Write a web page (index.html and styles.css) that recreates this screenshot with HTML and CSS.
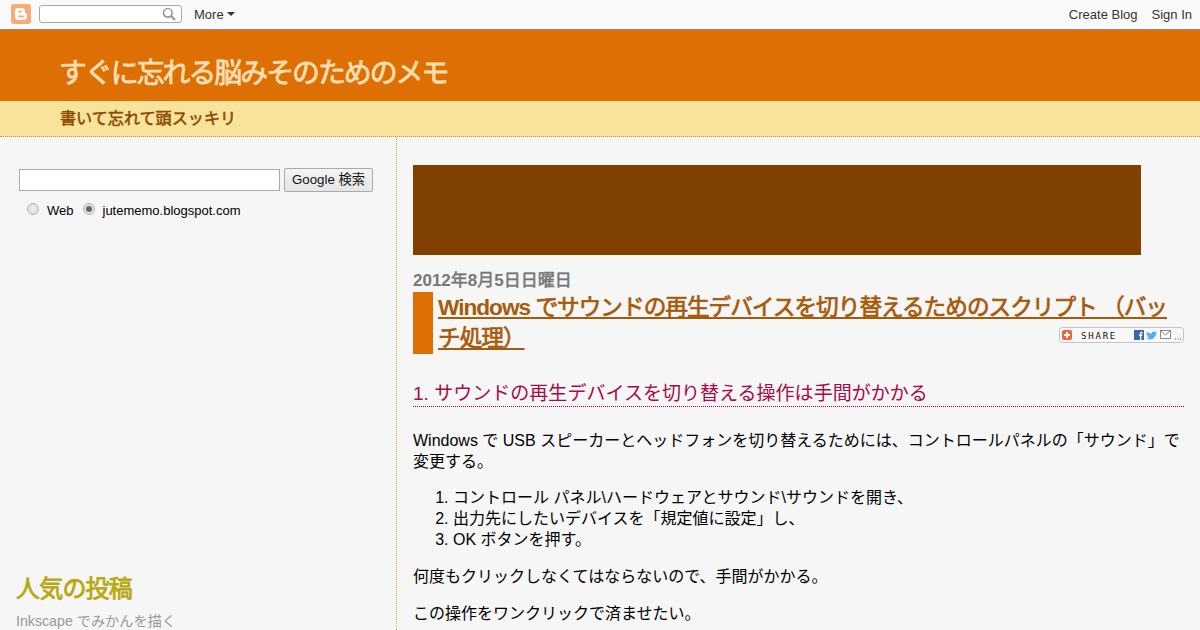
FILE: index.html
```html
<!DOCTYPE html>
<html lang="ja">
<head>
<meta charset="utf-8">
<title>すぐに忘れる脳みそのためのメモ</title>
<link rel="stylesheet" href="styles.css">
</head>
<body>
<nav class="navbar">
  <svg class="logo" width="20" height="20" viewBox="0 0 20 20"><rect width="20" height="20" rx="3" fill="#fba979"/><path d="M6.800 4h3.900C12.500 4 14 5.400 14 7.200V8.400c0 .5.4.8.9.8.6 0 1.100.4 1.100 1v2.800C16 15 14.400 16 12.800 16H7C5.300 16 4 14.700 4 13.200V6.800C4 5.200 5.300 4 6.800 4z" fill="#fff"/><rect x="7" y="6.800" width="4" height="1.600" rx=".8" fill="#fba979"/><rect x="7" y="11.600" width="6" height="1.600" rx=".8" fill="#fba979"/></svg>
  <div class="nav-search">
    <svg width="14" height="14" viewBox="0 0 14 14"><circle cx="5.800" cy="5.800" r="4.300" fill="none" stroke="#9a9a9a" stroke-width="1.700"/><path d="M9 9l4 4" stroke="#9a9a9a" stroke-width="2.300"/></svg>
  </div>
  <span class="nav-more">More</span><span class="caret"></span>
  <span class="nav-spacer"></span>
  <a class="nav-link">Create Blog</a>
  <a class="nav-link">Sign In</a>
</nav>
<header class="head">
  <h1 class="blog-title">すぐに忘れる脳みそのためのメモ</h1>
</header>
<div class="tagline"><p>書いて忘れて頭スッキリ</p></div>
<div class="columns">
  <aside class="side">
    <form class="cse">
      <div class="cse-row">
        <span class="cse-input"></span>
        <span class="cse-btn">Google 検索</span>
      </div>
      <div class="cse-radios">
        <span class="radio"></span><span class="radio-label">Web</span>
        <span class="radio on"></span><span class="radio-label">jutememo.blogspot.com</span>
      </div>
    </form>
    <h2 class="pop-title">人気の投稿</h2>
    <p class="pop-item">Inkscape でみかんを描く</p>
  </aside>
  <main class="main">
    <div class="ad"></div>
    <div class="date"><span class="lat">2012</span>年<span class="lat">8</span>月<span class="lat">5</span>日日曜日</div>
    <div class="post-head">
      <h2 class="post-title"><a><span class="lat">Windows</span> でサウンドの再生デバイスを切り替えるためのスクリプト （バッチ処理）</a></h2>
      <svg class="share" width="125" height="16" viewBox="0 0 125 16">
        <rect x=".5" y=".5" width="124" height="15" rx="3" fill="#f8f8f8" stroke="#c4c4c4"/>
        <rect x="3" y="3" width="10" height="10" rx="2" fill="#f0653c"/>
        <path d="M8 5v6M5 8h6" stroke="#fff" stroke-width="2"/>
        <text x="22" y="12" class="share-text">SHARE</text>
        <rect x="75" y="3" width="10" height="10" fill="#3b66a8"/>
        <path d="M81 13V9h-1V7.500h1V6.300c0-1 .6-1.500 1.500-1.500h1v1.500h-.7c-.3 0-.5.2-.5.500v.7h1.200l-.2 1.500h-1v4z" fill="#fff"/>
        <path d="M88 4.500c1.300 1.400 2.800 2.100 4.600 2.200-.1-1.800 2-3 3.400-1.700l1.800-.7-.9 1.500 1-.3-1 1.200c0 4-4.500 7.500-9.800 4.700 1.400.1 2.400-.2 3.400-.9-1.200-.1-2-.7-2.400-1.600h1.100c-1.200-.5-1.900-1.400-1.900-2.500l1 .3C87.500 5.800 87.400 5.200 88 4.500z" fill="#55acee"/>
        <rect x="101.500" y="3.500" width="10" height="8" fill="#fff" stroke="#8a8a8a"/>
        <path d="M102 4l4.500 4L111 4" fill="none" stroke="#8a8a8a"/>
        <path d="M116 12h1M118.500 12h1M121 12h1" stroke="#444"/>
      </svg>
    </div>
    <h3 class="sec-title">1. サウンドの再生デバイスを切り替える操作は手間がかかる</h3>
    <p class="para first">Windows で USB スピーカーとヘッドフォンを切り替えるためには、コントロールパネルの「サウンド」で変更する。</p>
    <ol class="steps">
      <li>コントロール パネル\ハードウェアとサウンド\サウンドを開き、</li>
      <li>出力先にしたいデバイスを「規定値に設定」し、</li>
      <li>OK ボタンを押す。</li>
    </ol>
    <p class="para">何度もクリックしなくてはならないので、手間がかかる。</p>
    <p class="para">この操作をワンクリックで済ませたい。</p>
  </main>
</div>
</body>
</html>
```
FILE: styles.css
```css
* { box-sizing: border-box; }
html, body { margin: 0; height: 630px; overflow: hidden; }
body {
  display: flex;
  flex-direction: column;
  background: #f6f6f6;
  color: #000;
  font-family: "Liberation Sans", "Noto Sans CJK JP", sans-serif;
  font-size: 16px;
}
h1, h2, h3, p, ol { margin: 0; }
.lat { font-weight: bold; -webkit-text-stroke: 0; }

.navbar {
  height: 30px;
  flex: none;
  display: flex;
  align-items: center;
  background: #fafafa;
  border-bottom: 1px solid #8a8a8a;
  padding: 0 8px 1px 11px;
  font-size: 13px;
  color: #333;
}
.logo { flex: none; margin-right: 8px; }
.nav-search {
  width: 143px;
  height: 18px;
  border: 1px solid #aaa;
  border-radius: 3px;
  background: #fff;
  display: flex;
  justify-content: flex-end;
  align-items: center;
  padding-right: 5px;
}
.nav-more { margin-left: 12px; }
.caret {
  margin-left: 3px;
  margin-top: -1px;
  border: 4px solid transparent;
  border-top: 4px solid #333;
  border-bottom: 0;
}
.nav-spacer { flex: 1; }
.nav-link { margin-left: 14px; }

.head {
  height: 71px;
  flex: none;
  background: #dd6f05;
  padding: 25px 0 0 59px;
}
.blog-title {
  font-size: 27.900px;
  line-height: 38px;
  font-weight: normal;
  -webkit-text-stroke: .8px #f8dfb0;
  letter-spacing: -2px;
  color: #f8dfb0;
}
.tagline {
  height: 36px;
  flex: none;
  background: #f8e39b;
  border-bottom: 1px dotted #b8964a;
  padding: 7px 0 0 60px;
  font-size: 16.100px;
  font-weight: normal;
  -webkit-text-stroke: .55px #8c4a00;
  line-height: 20px;
  color: #8c4a00;
}

.columns { flex: 1; display: flex; min-height: 0; }
.side {
  width: 397px;
  flex: none;
  border-right: 1px dotted #c9a83a;
  display: flex;
  flex-direction: column;
  padding: 31px 0 0 16px;
}
.cse { padding-left: 3px; font-size: 13px; }
.cse-row { display: flex; gap: 4px; align-items: center; }
.cse-input {
  width: 261px;
  height: 22px;
  background: #fff;
  border: 1px solid #aaa;
}
.cse-btn {
  width: 89px;
  height: 24px;
  border: 1px solid #aaa;
  border-radius: 2px;
  background: linear-gradient(#f4f4f4, #e6e6e6);
  text-align: center;
  line-height: 22px;
  font-size: 13.300px;
  color: #111;
}
.cse-radios {
  display: flex;
  align-items: center;
  margin: 11px 0 0 8px;
}
.radio {
  width: 12px;
  height: 12px;
  border-radius: 50%;
  border: 1px solid #b4b4b4;
  background: radial-gradient(#eee, #d8d8d8);
  margin-top: -5px;
  margin-right: 8px;
  display: flex;
  align-items: center;
  justify-content: center;
}
.radio.on::after {
  content: "";
  width: 6px;
  height: 6px;
  border-radius: 50%;
  background: #666;
}
.radio-label { margin-right: 9px; line-height: 16px; }
.pop-title {
  margin-top: 356px;
  font-size: 24px;
  line-height: 28px;
  font-weight: normal;
  -webkit-text-stroke: .8px #b8a80e;
  letter-spacing: -.8px;
  color: #b8a80e;
}
.pop-item {
  margin-top: 9px;
  font-size: 14.200px;
  line-height: 18px;
  color: #999;
}

.main { flex: 1; min-width: 0; padding: 28px 16px 0 16px; }
.ad { width: 728px; height: 90px; background: #804000; }
.date {
  margin-top: 15px;
  font-size: 17px;
  line-height: 22px;
  -webkit-text-stroke: .55px #777;
  color: #777;
}
.post-head { position: relative; }
.post-title {
  border-left: 20px solid #dd6f05;
  padding-left: 5px;
  font-size: 22.650px;
  line-height: 31px;
  font-weight: normal;
  -webkit-text-stroke: .7px #a65a0a;
  letter-spacing: -1px;
  color: #a65a0a;
}
.post-title a { text-decoration: underline; }
.share { position: absolute; right: 0; bottom: 11px; }
.share-text { font: 9px "DejaVu Sans Mono", monospace; fill: #111; letter-spacing: 1.800px; }
.sec-title {
  margin-top: 27px;
  border-bottom: 1px dotted #8a0a4a;
  font-size: 19.040px;
  line-height: 25px;
  font-weight: normal;
  color: #a80a4a;
}
.para { line-height: 21px; margin-top: 16px; }
.para.first { margin-top: 23px; }
.steps { margin-top: 15px; padding-left: 40px; line-height: 21px; }
```
